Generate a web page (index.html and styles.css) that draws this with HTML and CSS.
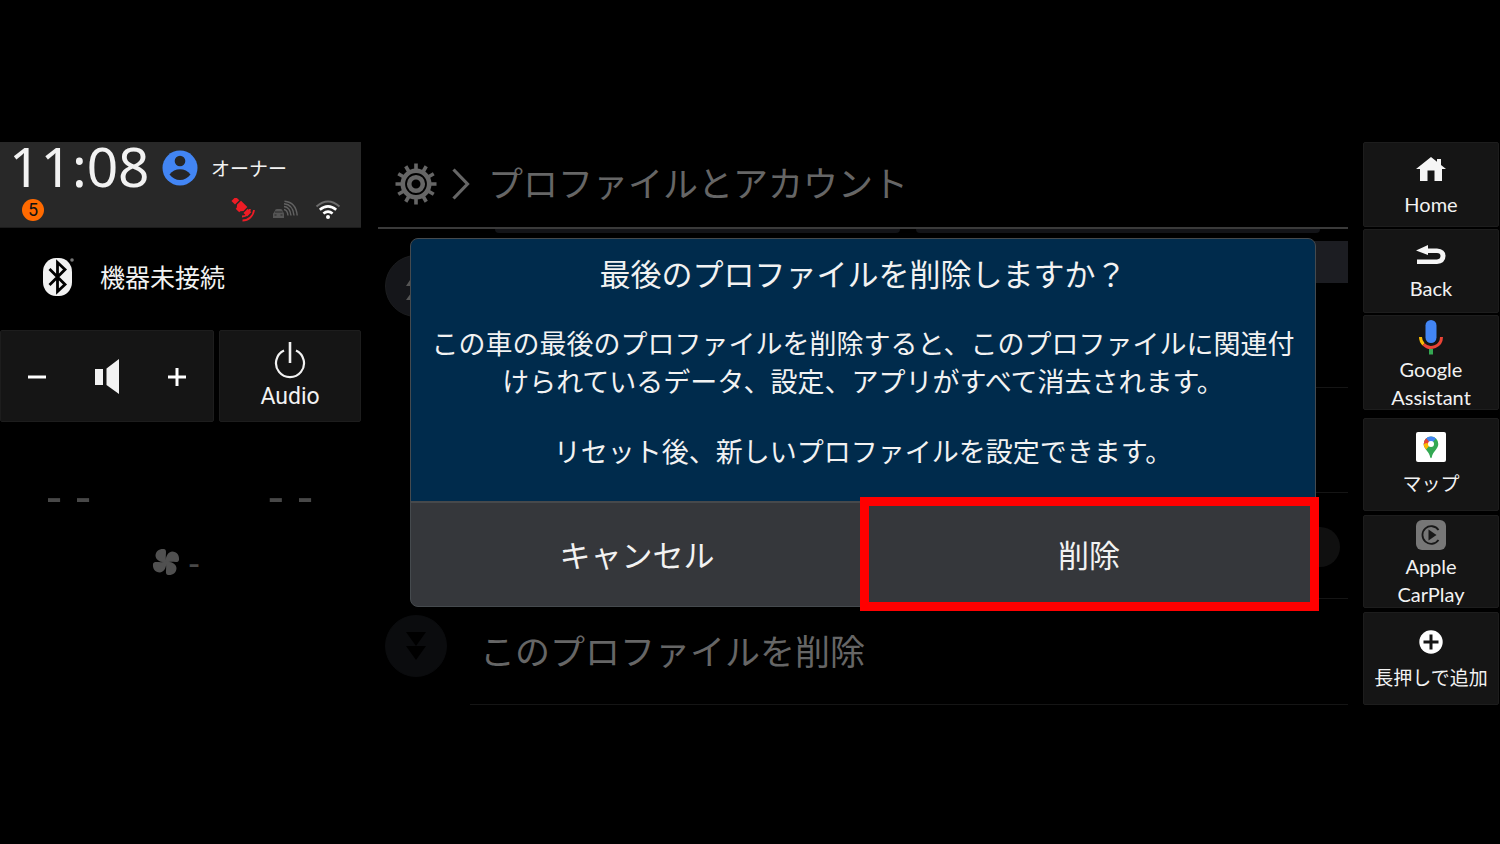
FILE: index.html
```html
<!DOCTYPE html>
<html lang="ja">
<head>
<meta charset="utf-8">
<title>プロファイルとアカウント</title>
<link rel="stylesheet" href="styles.css">
</head>
<body>
<div class="screen">
  <aside class="left">
    <header class="status">
      <div class="status-top">
        <time class="clock">11:08</time>
        <svg class="avatar" viewBox="0 0 36 36"><circle cx="18" cy="18" r="17.5" fill="#4285f4"/><circle cx="18" cy="11" r="5.3" fill="#262626"/><path d="M7.5 24.5C10 21 14 19.300 18 19.300S26 21 28.500 24.500C26 28 22 30 18 30S10 28 7.500 24.500Z" fill="#262626"/></svg>
        <span class="owner">オーナー</span>
      </div>
      <div class="status-bottom">
        <span class="badge">5</span>
        <div class="signals">
          <svg width="24" height="24" viewBox="0 0 24 24"><g fill="#ee1c25"><g transform="rotate(45 10 9)"><path d="M5.500 4.500H14.500V10L12.500 12.500V14H7.500V12.500L5.500 10Z"/><rect x="-1" y="5.500" width="5" height="6"/><rect x="16" y="5.500" width="5" height="6"/></g></g><path d="M11 18.500A8 8 0 0 0 19 11M11.500 22.500A11.500 11.500 0 0 0 23 12" fill="none" stroke="#ee1c25" stroke-width="1.800"/></svg>
          <svg width="26" height="20" viewBox="0 0 26 20"><path d="M2 12.500L3.500 9.500Q4 9 5 9H8.500Q9.500 9 10 9.500L11.500 12.500Q12 13 12 14V18H1V14Q1 13 2 12.500Z" fill="#565656"/><path d="M3 12H10.500M2.500 15H4.500M8.500 15H10.500" stroke="#282828"/><path d="M12 9.500Q15.500 10 16 15.500M12 6.500Q18 7 19 15.500M12 3.800Q21 4.500 22 15.500M12.500 1.200Q24 2 25.200 15.500" fill="none" stroke="#626262" stroke-width="1.400"/></svg>
          <svg width="26" height="20" viewBox="0 0 26 20"><g fill="none" stroke-width="2.600"><path d="M1.500 6.500Q13-3.500 24.500 6.500" stroke="#6c6c6c" stroke-width="2"/><path d="M4.800 9.800Q13 3 21.200 9.800M8.400 13.500Q13 9.800 17.600 13.500" stroke="#fff"/></g><circle cx="13" cy="17" r="2" fill="#fff"/></svg>
        </div>
      </div>
    </header>

    <div class="device">
      <svg width="34" height="40" viewBox="0 0 34 40"><rect x="1" y="1" width="29" height="38" rx="13" ry="14" fill="#f2f2f2"/><path d="M7.500 12L23 27.500L15.500 34.500V5.500L23 12.500L7.500 28" fill="none" stroke="#000" stroke-width="2.800"/><circle cx="30" cy="3" r="1.800" fill="#777"/></svg>
      <span>機器未接続</span>
    </div>

    <div class="controls">
      <div class="volume">
        <button class="key"><svg width="20" height="20" viewBox="0 0 20 20"><path d="M1 10H19" stroke="#fff" stroke-width="3"/></svg></button>
        <button class="key"><svg width="26" height="36" viewBox="0 0 26 36"><path d="M1 10H9V26H1ZM12.500 9.500L25 0V35L12.500 26Z" fill="#f2f2f2"/></svg></button>
        <button class="key"><svg width="20" height="20" viewBox="0 0 20 20"><path d="M1 10H19M10 1V19" stroke="#fff" stroke-width="3"/></svg></button>
      </div>
      <button class="audio">
        <svg width="32" height="38" viewBox="0 0 32 38"><path d="M10 9.500A14 14 0 1 0 22 9.500" fill="none" stroke="#f2f2f2" stroke-width="2.200"/><path d="M16 1V22" stroke="#f2f2f2" stroke-width="2.600"/></svg>
        <span>Audio</span>
      </button>
    </div>

    <div class="temps"><span>- -</span><span>- -</span></div>
    <div class="fan">
      <svg width="28" height="28" viewBox="0 0 28 28" fill="#505050"><path d="M14.500 14.500C9 14.500 4 12.500 3.500 8C3.500 3 7.500.500 12 1C16 2 12.500 7 14.500 14.500Z"/><path d="M14.500 14.500C9 14.500 4 12.500 3.500 8C3.500 3 7.500.500 12 1C16 2 12.500 7 14.500 14.500Z" transform="rotate(90 14 14)"/><path d="M14.500 14.500C9 14.500 4 12.500 3.500 8C3.500 3 7.500.500 12 1C16 2 12.500 7 14.500 14.500Z" transform="rotate(180 14 14)"/><path d="M14.500 14.500C9 14.500 4 12.500 3.500 8C3.500 3 7.500.500 12 1C16 2 12.500 7 14.500 14.500Z" transform="rotate(270 14 14)"/></svg>
      <span>-</span>
    </div>
  </aside>

  <main class="main">
    <header class="crumbs">
      <svg width="42" height="42" viewBox="0 0 42 42"><g fill="none" stroke="#666"><circle cx="21" cy="21" r="13.200" stroke-width="4.600"/><circle cx="21" cy="21" r="6.800" stroke-width="4.600"/><g stroke-width="3.600"><path d="M21 .5V8M21 34V41.500M.5 21H8M34 21H41.500"/><path d="M21 .5V8M21 34V41.500M.5 21H8M34 21H41.500" transform="rotate(30 21 21)"/><path d="M21 .5V8M21 34V41.500M.5 21H8M34 21H41.500" transform="rotate(60 21 21)"/></g></g></svg>
      <svg width="18" height="32" viewBox="0 0 18 32"><path d="M1.500 1.500L15.500 16L1.500 30.500" fill="none" stroke="#666" stroke-width="3.200"/></svg>
      <h1>プロファイルとアカウント</h1>
    </header>
    <div class="list">
      <div class="scroller">
        <button class="scroll"><svg width="20" height="30" viewBox="0 0 20 30"><path d="M10 0L20 15H0ZM10 15L20 29H0Z" fill="#555"/></svg></button>
        <button class="scroll scroll-end"><svg width="20" height="30" viewBox="0 0 20 30"><path d="M0 1H20L10 15ZM0 15H20L10 29Z" fill="#000"/></svg></button>
      </div>
      <div class="rows">
        <div class="cards"><span></span><span></span></div>
        <div class="band"></div>
        <div class="row"></div>
        <div class="row"></div>
        <div class="row"><span class="toggle"></span></div>
        <div class="row">このプロファイルを削除</div>
      </div>
    </div>

    <section class="dialog" role="dialog" aria-labelledby="dialog-title">
      <div class="message">
        <h2 id="dialog-title">最後のプロファイルを削除しますか？</h2>
        <p>この車の最後のプロファイルを削除すると、このプロファイルに関連付<br>けられているデータ、設定、アプリがすべて消去されます。</p>
        <p>リセット後、新しいプロファイルを設定できます。</p>
      </div>
      <div class="actions">
        <button>キャンセル</button>
        <button class="marked">削除</button>
      </div>
    </section>
  </main>

  <nav class="dock">
    <div class="group system">
      <button class="tile"><svg width="30" height="26" viewBox="0 0 30 26"><path d="M15 1L21 5.800V3H25V9L30 13H26V25H18.500V14.500H11.500V25H4V13H0Z" fill="#f5f5f5"/></svg><span>Home</span></button>
      <button class="tile"><svg width="30" height="22" viewBox="0 0 30 22"><path d="M0 6.500L12 1V4.500H21Q29.500 5 29.500 12T21 20H1V15.500H21Q24.500 15 24.500 12T21 9H12V11Z" fill="#f5f5f5"/></svg><span>Back</span></button>
      <button class="tile"><svg width="26" height="36" viewBox="0 0 26 36"><rect x="7.500" y="1" width="11" height="23" rx="5.500" fill="#4285f4"/><g fill="none" stroke-width="3"><path d="M2.500 18A10.500 10.500 0 0 0 5.600 25.400" stroke="#fbbc04"/><path d="M5.600 25.400A10.500 10.500 0 0 0 23.500 18" stroke="#ea4335"/><path d="M13 30V35.500" stroke="#34a853" stroke-width="4"/></g></svg><span>Google<br>Assistant</span></button>
    </div>
    <div class="group apps">
      <button class="tile"><svg width="30" height="30" viewBox="0 0 30 30"><defs><clipPath id="pin"><path d="M15 4.500A7.300 7.300 0 0 1 22.300 12C22.300 17 17 19 15.700 25.500Q15 27 14.300 25.500C13 19 7.700 17 7.700 12A7.300 7.300 0 0 1 15 4.500Z"/></clipPath></defs><rect width="30" height="30" rx="2" fill="#fff"/><g clip-path="url(#pin)"><rect width="30" height="30" fill="#34a853"/><path d="M15 12L23 3V0H5L10 7Z" fill="#4285f4"/><path d="M15 12L10 6L4 8V14L9 15Z" fill="#ea4335"/><path d="M15 12L7 21L5 14L10 11Z" fill="#fbbc04"/></g><circle cx="15" cy="12" r="3" fill="#fff"/></svg><span>マップ</span></button>
      <button class="tile"><svg width="30" height="30" viewBox="0 0 30 30"><rect width="30" height="30" rx="6" fill="#777"/><path d="M22.500 10A8.800 8.800 0 1 0 22.500 20" fill="none" stroke="#181818" stroke-width="1.800"/><path d="M12.500 9.500L20.500 15L12.500 20.500Z" fill="#181818"/></svg><span>Apple<br>CarPlay</span></button>
      <button class="tile add"><svg width="24" height="24" viewBox="0 0 24 24"><circle cx="12" cy="12" r="11.700" fill="#fff"/><path d="M4.500 12H19.500M12 4.500V19.500" stroke="#161616" stroke-width="3"/></svg><span>長押しで追加</span></button>
    </div>
  </nav>
</div>
</body>
</html>
```
FILE: styles.css
```css
* { box-sizing: border-box; }
body {
  margin: 0;
  background: #000;
  color: #f2f2f2;
  font-family: Lato, "Noto Sans CJK JP", sans-serif;
}
h1, h2, p { margin: 0; font-weight: 400; }
button {
  margin: 0;
  padding: 0;
  border: 0;
  background: none;
  color: inherit;
  font: inherit;
}
svg { display: block; flex: none; }

.screen {
  display: grid;
  grid-template-columns: 361px 1fr 136px;
  padding: 142px 1px 140px 0;
}

/* Left column */
.status {
  display: flex;
  flex-direction: column;
  gap: 4px;
  height: 86px;
  padding: 0 20px 0 9px;
  border-bottom: 1px solid #1c1c1c;
  background: #282828;
}
.status-top { display: flex; align-items: center; height: 52px; }
.clock { width: 153px; font: 55px/48px "Noto Sans", sans-serif; padding-bottom: 4px; }
.avatar { width: 36px; height: 36px; }
.owner { margin-left: 13px; padding-bottom: 2px; font-size: 19px; }
.status-bottom { display: flex; align-items: center; justify-content: space-between; padding-left: 13px; }
.badge {
  width: 22px;
  height: 22px;
  border-radius: 50%;
  background: #ff6a00;
  color: #111;
  font: 18px/22px Roboto, sans-serif;
  text-align: center;
}
.signals { display: flex; align-items: center; gap: 17px; }
.device { display: flex; align-items: center; gap: 24px; height: 102px; padding: 0 0 4px 42px; font-size: 25px; }
.device span { padding-bottom: 2px; }
.controls { display: grid; grid-template-columns: 214fr 142fr; gap: 5px; height: 92px; }
.volume, .audio { border: 1px solid #1d1d1d; border-radius: 2px; background: #151515; }
.volume { display: flex; align-items: center; justify-content: space-between; padding: 2px 26px 0; }
.key { display: flex; }
.audio { display: flex; flex-direction: column; align-items: center; justify-content: center; gap: 4px; font: 23px/28px Roboto, sans-serif; }
.temps { display: flex; justify-content: space-between; padding: 46px 48px 0 46px; color: #484848; font: 50px/52px "Noto Sans", sans-serif; }
.fan { display: flex; align-items: center; justify-content: center; gap: 8px; padding: 24px 9px 0 0; color: #484848; font: 36px/48px "Noto Sans", sans-serif; }
.fan span { line-height: 36px; }

/* Settings area */
.main { position: relative; margin: 0 15px 0 17px; color: #666; }
.crumbs { display: flex; align-items: center; height: 87px; padding: 0 0 2px 17px; border-bottom: 2px solid #3a3a3a; }
.crumbs h1 { margin-left: 18px; padding-bottom: 2px; font-size: 35px; line-height: 48px; }
.crumbs svg + svg { margin-left: 15px; }
.list { display: grid; grid-template-columns: 92px 1fr; }
.scroller { display: flex; flex-direction: column; justify-content: space-between; padding: 26px 0 28px 7px; }
.scroll { display: grid; place-items: center; width: 62px; height: 62px; border: 1px solid #1b1c1e; border-radius: 50%; background: #15161a; }
.scroll-end { border-color: #0b0c0e; background: #0b0c0e; }
.cards { display: grid; grid-template-columns: 1fr 1fr; gap: 16px; height: 12px; padding: 0 28px 8px 25px; }
.cards span { border-radius: 0 0 6px 6px; background: #131418; }
.band { height: 42px; background: #1c1d22; }
.row { display: flex; align-items: center; height: 105px; padding: 0 8px 4px 10px; border-bottom: 1px solid #151515; font-size: 35px; }
.row:nth-child(n+5) { height: 106px; }
.toggle { width: 70px; height: 40px; margin: 6px 0 0 auto; border-radius: 20px; background: #101010; }

/* Dialog */
.dialog { position: absolute; top: 96px; left: 32px; right: 32px; overflow: visible; border: 1px solid #454a4e; border-radius: 8px; background: #35373b; color: #f2f2f2; text-align: center; }
.message { display: grid; gap: 32px; padding: 16px 0 30px; border-radius: 7px 7px 0 0; background: #002b4c; font-size: 27px; line-height: 38px; }
.message h2 { font-size: 31px; line-height: 38px; }
.actions { display: grid; grid-template-columns: 1fr 1fr; height: 105px; border-top: 2px solid #46494c; }
.actions button { position: relative; padding-bottom: 2px; font-size: 31px; }
.marked::after { content: ""; position: absolute; inset: -6px -4px -5px -3px; border: 9px solid #f00; }

/* Right dock */
.dock { display: flex; flex-direction: column; gap: 8px; }
.group { display: grid; }
.system { grid-template-rows: 85px 84px 95px; gap: 2px; }
.apps { grid-template-rows: repeat(3, 93px); gap: 4px; }
.tile { display: flex; flex-direction: column; align-items: center; justify-content: center; gap: 8px; padding-top: 4px; border: 1px solid #1d1d1d; border-radius: 2px; background: #151515; font-size: 20px; line-height: 28px; }
.tile:nth-child(3), .apps .tile:nth-child(2) { gap: 2px; }
.system .tile:nth-child(3) { gap: 0; }
.apps .tile:first-child { padding-top: 0; font-size: 19px; }
.apps .add { gap: 10px; font-size: 19px; }
```
